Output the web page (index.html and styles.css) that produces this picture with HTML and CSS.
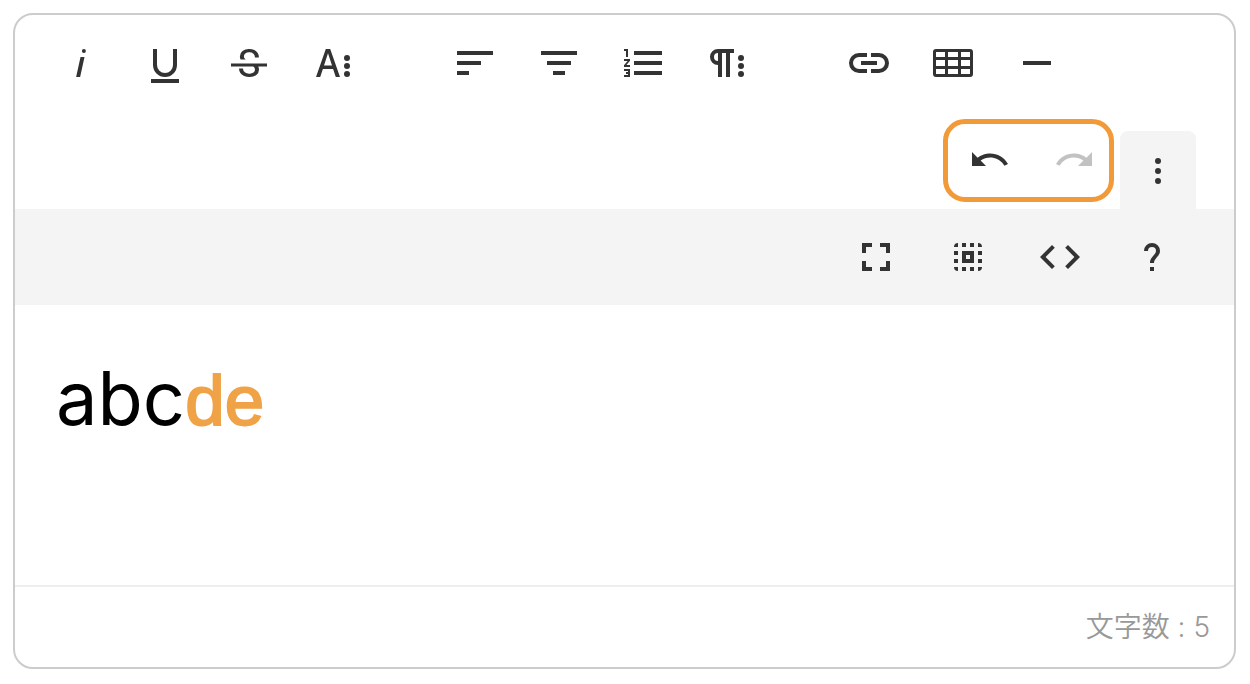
FILE: index.html
```html
<!DOCTYPE html>
<html lang="ja">
<head>
<meta charset="utf-8">
<title>Editor</title>
<link rel="stylesheet" href="styles.css">
</head>
<body>
<main class="editor">
  <div class="toolbar" role="toolbar" aria-label="Formatting">
    <div class="group">
      <button class="tool" type="button" aria-label="Italic"><svg class="icon" viewBox="0 0 24 24"><path d="M11.76 9h2l-2.2 10h-2Zm1.68-4a1 1 0 1 0 1 1 1 1 0 0 0-1-1Z"/></svg></button>
      <button class="tool" type="button" aria-label="Underline"><svg class="icon" viewBox="0 0 24 24"><path d="M5 20h14v2H5ZM6 5h2v8a4 4 0 0 0 8 0V5h2v8a6 6 0 0 1-12 0Z"/></svg></button>
      <button class="tool" type="button" aria-label="Strikethrough"><svg class="icon" viewBox="0 0 24 24"><path d="M3,12.20294H21v1.5H16.63422a3.59782,3.59782,0,0,1,.34942,1.5929,3.252,3.252,0,0,1-1.31427,2.6997A5.55082,5.55082,0,0,1,12.20251,19a6.4421,6.4421,0,0,1-2.62335-.539,4.46335,4.46335,0,0,1-1.89264-1.48816,3.668,3.668,0,0,1-.67016-2.15546V14.704h.28723v-.0011h.34149v.0011H9.02v.11334a2.18275,2.18275,0,0,0,.85413,1.83069,3.69,3.69,0,0,0,2.32836.67926,3.38778,3.38778,0,0,0,2.07666-.5462,1.73346,1.73346,0,0,0,.7013-1.46655,1.69749,1.69749,0,0,0-.647-1.43439,3.00525,3.00525,0,0,0-.27491-.17725H3ZM16.34473,7.05981A4.18163,4.18163,0,0,0,14.6236,5.5462,5.627,5.627,0,0,0,12.11072,5,5.16083,5.16083,0,0,0,8.74719,6.06213,3.36315,3.36315,0,0,0,7.44006,8.76855a3.22923,3.22923,0,0,0,.3216,1.42786h2.59668c-.08338-.05365-.18537-.10577-.25269-.16064a1.60652,1.60652,0,0,1-.65283-1.30036,1.79843,1.79843,0,0,1,.68842-1.5108,3.12971,3.12971,0,0,1,1.96948-.55243,3.04779,3.04779,0,0,1,2.106.6687,2.35066,2.35066,0,0,1,.736,1.83258v.11341h2.00317V9.17346A3.90013,3.90013,0,0,0,16.34473,7.05981Z"/></svg></button>
      <button class="tool" type="button" aria-label="More text"><svg class="icon" viewBox="0 0 24 24"><path fill-rule="evenodd" d="M8.4 5h2.200l4.900 14h-2.100l-1.350-4h-5.100L5.600 19H3.500ZM9.500 7.100 7.500 13.200h4Z"/><circle cx="19" cy="9.5" r="1.5"/><circle cx="19" cy="13.5" r="1.5"/><circle cx="19" cy="17.5" r="1.5"/></svg></button>
    </div>
    <div class="group">
      <button class="tool" type="button" aria-label="Align left"><svg class="icon" viewBox="0 0 24 24"><path d="M3 6h18v2H3ZM3 11h12v2H3ZM3 16h6v2H3Z"/></svg></button>
      <button class="tool" type="button" aria-label="Align center"><svg class="icon" viewBox="0 0 24 24"><path d="M3 6h18v2H3ZM6 11h12v2H6ZM9 16h6v2H9Z"/></svg></button>
      <button class="tool" type="button" aria-label="Ordered list"><svg class="icon" viewBox="0 0 24 24"><path d="M2.5 16h2v.5h-1v1h1v.5h-2v1h3v-4h-3Zm1-7h1V5h-2v1h1Zm-1 2h1.8l-1.8 2.1v.9h3v-1H3.7l1.8-2.1V10h-3Zm5-5v2h14V6Zm0 12h14v-2h-14Zm0-5h14v-2h-14Z"/></svg></button>
      <button class="tool" type="button" aria-label="More paragraph"><svg class="icon" viewBox="0 0 24 24"><path fill-rule="evenodd" d="M7.5 5h8v2h-2v12h-2V7h-2v12h-2v-6a4 4 0 0 1 0-8Zm0 2a2 2 0 0 0 0 4Z"/><circle cx="19" cy="9.5" r="1.5"/><circle cx="19" cy="13.5" r="1.5"/><circle cx="19" cy="17.5" r="1.5"/></svg></button>
    </div>
    <div class="group">
      <button class="tool" type="button" aria-label="Insert link"><svg class="icon" viewBox="0 0 24 24"><path d="M11 17H7A5 5 0 0 1 7 7h4v2H7a3 3 0 0 0 0 6h4ZM8 11h8v2H8ZM13 7h4a5 5 0 0 1 0 10h-4v-2h4a3 3 0 0 0 0-6h-4Z"/></svg></button>
      <button class="tool" type="button" aria-label="Insert table"><svg class="icon" viewBox="0 0 24 24"><path fill-rule="evenodd" d="M3.5 5h17A1.5 1.5 0 0 1 22 6.500v11a1.500 1.500 0 0 1-1.500 1.500h-17A1.500 1.500 0 0 1 2 17.500v-11A1.500 1.500 0 0 1 3.500 5ZM3.500 6.500V9H8V6.500ZM9.500 6.500V9h5V6.500ZM16 6.500V9h4.500V6.500ZM3.500 10.500v3H8v-3ZM9.500 10.500v3h5v-3ZM16 10.500v3h4.500v-3ZM3.500 15v2.500H8V15ZM9.500 15v2.500h5V15ZM16 15v2.500h4.500V15Z"/></svg></button>
      <button class="tool" type="button" aria-label="Horizontal line"><svg class="icon" viewBox="0 0 24 24"><path d="M5 11h14v2H5Z"/></svg></button>
    </div>
  </div>
  <div class="history-row">
    <div class="history">
      <button class="tool tool-narrow" type="button" aria-label="Undo"><svg class="icon" viewBox="0 0 24 24"><path d="M10.4 9.400c-1.700.3-3.200.9-4.600 2L3 8.500v7h7l-2.700-2.700c3.700-2.600 8.800-1.800 11.500 1.900.2.2.3.5.4.7l1.800-.9C18.900 10.800 14.700 8.700 10.400 9.400Z"/></svg></button>
      <button class="tool tool-narrow" type="button" aria-label="Redo" disabled><svg class="icon" viewBox="0 0 24 24"><path d="M13.600 9.400c1.700.3 3.200.9 4.600 2L21 8.500v7h-7l2.700-2.700C13 10.200 7.900 11 5.200 14.700c-.2.2-.3.5-.4.7L3 14.500C5.100 10.800 9.300 8.700 13.600 9.400Z"/></svg></button>
    </div>
    <button class="tool more" type="button" aria-label="More" aria-expanded="true"><svg class="icon" viewBox="0 0 24 24"><circle cx="12" cy="7" r="1.500"/><circle cx="12" cy="12" r="1.500"/><circle cx="12" cy="17" r="1.500"/></svg></button>
  </div>
  <div class="extras">
    <button class="tool" type="button" aria-label="Fullscreen"><svg class="icon" viewBox="0 0 24 24"><path d="M5 5h5v2H7v3H5ZM14 5h5v5h-2V7h-3ZM5 14h2v3h3v2H5ZM17 14h2v5h-5v-2h3Z"/></svg></button>
    <button class="tool" type="button" aria-label="Select all"><svg class="icon" viewBox="0 0 24 24"><path fill-rule="evenodd" d="M7 5v2H5a2 2 0 0 1 2-2ZM9 5h2v2H9ZM13 5h2v2h-2ZM17 5a2 2 0 0 1 2 2h-2ZM5 9h2v2H5ZM17 9h2v2h-2ZM5 13h2v2H5ZM17 13h2v2h-2ZM5 17h2v2a2 2 0 0 1-2-2ZM9 17h2v2H9ZM13 17h2v2h-2ZM17 17h2a2 2 0 0 1-2 2ZM9 9h6v6H9ZM11 11v2h2v-2Z"/></svg></button>
    <button class="tool" type="button" aria-label="Code view"><svg class="icon" viewBox="0 0 24 24"><path d="M9.400 16.600 4.800 12l4.600-4.600L8 6l-6 6 6 6ZM14.600 16.600l4.600-4.600-4.600-4.600L16 6l6 6-6 6Z"/></svg></button>
    <button class="tool" type="button" aria-label="Help"><svg class="icon" viewBox="0 0 24 24"><path d="M11 17h2v2h-2ZM12 5a4 4 0 0 0-4 4h2a2 2 0 0 1 4 0c0 2-3 2.800-3 6h2c0-2.200 3-3.500 3-6a4 4 0 0 0-4-4Z"/></svg></button>
  </div>
  <div class="content" contenteditable="true" role="textbox" aria-label="Content" spellcheck="false">abc<strong class="accent">de</strong></div>
  <footer class="status">文字数 : 5</footer>
</main>
</body>
</html>
```
FILE: styles.css
```css
* {
  box-sizing: border-box;
}

body {
  margin: 0;
  padding: 13px 14px 15px 13px;
  background: #fff;
  font-family: Inter, "Noto Sans CJK JP", sans-serif;
}

.editor {
  border: 2px solid #ccc;
  border-radius: 20px;
  background: #fff;
  overflow: hidden;
}

.toolbar {
  display: flex;
  flex-wrap: wrap;
  gap: 66px;
  padding: 10px 28px 0;
}

.group {
  display: flex;
  gap: 8px;
}

.tool {
  display: flex;
  align-items: center;
  justify-content: center;
  width: 76px;
  height: 76px;
  padding: 0;
  border: 0;
  border-radius: 8px;
  background: transparent;
  color: #333;
}

.tool:disabled {
  color: #c2c2c2;
}

.icon {
  width: 48px;
  height: 48px;
  fill: currentColor;
}

.history-row {
  display: flex;
  align-items: flex-end;
  justify-content: flex-end;
  gap: 6px;
  padding: 18px 38px 0;
}

.history {
  display: flex;
  align-items: center;
  gap: 24px;
  margin-bottom: 7px;
  padding: 0 5px 3px 12px;
  border: 5px solid #f39a38;
  border-radius: 22px;
}

.tool-narrow {
  width: 60px;
  height: 70px;
}

.more {
  height: 78px;
  padding-top: 2px;
  border-radius: 8px 8px 0 0;
  background: #f4f4f4;
}

.extras {
  display: flex;
  justify-content: flex-end;
  gap: 16px;
  padding: 10px 44px;
  background: #f4f4f4;
}

.content {
  min-height: 280px;
  padding: 48px 41px;
  color: #000;
  font-size: 74px;
  font-weight: 400;
  line-height: 90px;
  outline: none;
}

.accent {
  color: #f0a346;
  font-family: "Liberation Sans", sans-serif;
  font-size: 71px;
  font-weight: 400;
  -webkit-text-stroke: 2px currentColor;
}

.status {
  padding: 20px 24px;
  border-top: 2px solid #eee;
  color: #999;
  font-size: 28px;
  font-weight: 350;
  font-feature-settings: "calt" 0;
  line-height: 40px;
  text-align: right;
}
```
